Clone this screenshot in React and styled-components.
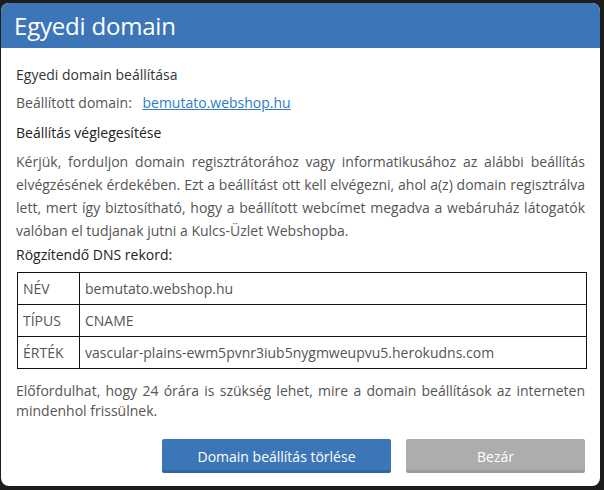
import React from 'react';
import styled, { createGlobalStyle } from 'styled-components';

const GlobalStyle = createGlobalStyle`
	html, body {
		margin: 0;
		padding: 0;
		background: #1d1d1d;
	}
	body {
		font-family: 'Open Sans', 'Liberation Sans', sans-serif;
	}
`;

const Page = styled.div`
	width: 604px;
	height: 490px;
	padding: 3px 4px 4px 1px;
	box-sizing: border-box;
	display: flex;
`;

const Modal = styled.div`
	flex: 1;
	background: #fff;
	border-radius: 8px;
	overflow: hidden;
	display: flex;
	flex-direction: column;
`;

const Header = styled.div`
	background: #3c76b8;
	height: 45px;
	display: flex;
	align-items: center;
	padding: 0 13px;
	h2 {
		margin: 0;
		color: #fff;
		font-size: 24px;
		font-weight: 400;
		letter-spacing: -0.2px;
	}
`;

const Body = styled.div`
	padding: 17px 15px 0 15px;
	color: #555;
	font-size: 14px;
`;

const Title = styled.div`
	color: ${({ dark }) => (dark ? '#222' : '#333')};
	font-size: 14px;
	line-height: 20px;
	margin-bottom: ${({ mb }) => mb || 8}px;
`;

const Row = styled.div`
	line-height: 20px;
	margin-bottom: 10px;
	a {
		color: #2f7bc4;
		text-decoration: underline;
		margin-left: 7px;
	}
`;

const Paragraph = styled.p`
	margin: 0 0 3px;
	line-height: 23px;
	text-align: justify;
	color: #555;
`;

const DnsTable = styled.table`
	width: 570px;
	border-collapse: collapse;
	margin: 0 0 12px 1px;
	td {
		border: 1px solid #111;
		height: 31px;
		padding: 0 5px;
		color: #555;
		font-size: 14px;
	}
	td:first-child {
		width: 51px;
	}
`;

const Note = styled.p`
	margin: 0;
	line-height: 20px;
	text-align: justify;
	color: #555;
`;

const Footer = styled.div`
	display: flex;
	justify-content: flex-end;
	gap: 15px;
	padding: 0 15px 0 0;
	margin-top: 18px;
`;

const Button = styled.button`
	width: ${({ w }) => w}px;
	height: 34px;
	border: none;
	border-bottom: 3px solid ${({ grey }) => (grey ? '#9b9b9b' : '#33659f')};
	border-radius: 2px;
	background: ${({ grey }) => (grey ? '#adadad' : '#3c76b8')};
	color: #fff;
	font-family: 'Open Sans', 'Liberation Sans', sans-serif;
	font-size: 14px;
	padding: 3px 0 0;
	cursor: pointer;
`;

const records = [
	['NÉV', 'bemutato.webshop.hu'],
	['TÍPUS', 'CNAME'],
	['ÉRTÉK', 'vascular-plains-ewm5pvnr3iub5nygmweupvu5.herokudns.com'],
];

export default function App() {
	return (
		<>
			<GlobalStyle />
			<Page>
				<Modal>
					<Header>
						<h2>Egyedi domain</h2>
					</Header>
					<Body>
						<Title mb={8}>Egyedi domain beállítása</Title>
						<Row>
							Beállított domain: <a href='#'>bemutato.webshop.hu</a>
						</Row>
						<Title dark mb={7}>Beállítás véglegesítése</Title>
						<Paragraph>
							Kérjük, forduljon domain regisztrátorához vagy informatikusához az
							alábbi beállítás elvégzésének érdekében. Ezt a beállítást ott kell
							elvégezni, ahol a(z) domain regisztrálva lett, mert így
							biztosítható, hogy a beállított webcímet megadva a webáruház
							látogatók valóban el tudjanak jutni a Kulcs-Üzlet Webshopba.
						</Paragraph>
						<Title dark mb={7}>Rögzítendő DNS rekord:</Title>
						<DnsTable>
							<tbody>
								{records.map(([name, value]) => (
									<tr key={name}>
										<td>{name}</td>
										<td>{value}</td>
									</tr>
								))}
							</tbody>
						</DnsTable>
						<Note>
							Előfordulhat, hogy 24 órára is szükség lehet, mire a domain
							beállítások az interneten mindenhol frissülnek.
						</Note>
					</Body>
					<Footer>
						<Button w={229}>Domain beállítás törlése</Button>
						<Button grey w={179}>Bezár</Button>
					</Footer>
				</Modal>
			</Page>
		</>
	);
}
